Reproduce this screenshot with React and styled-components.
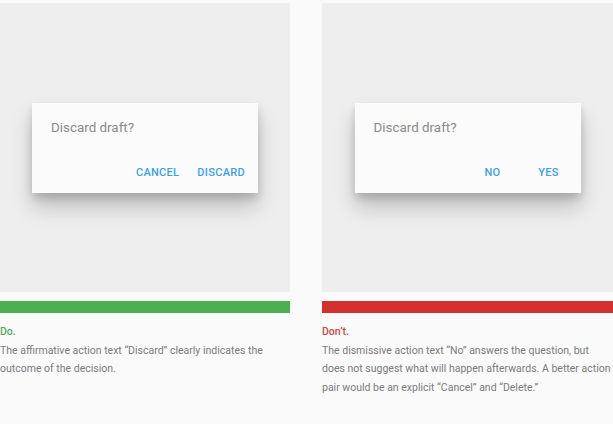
import React from "react";
import styled, { createGlobalStyle } from "styled-components";

const GlobalStyle = createGlobalStyle`
  html, body {
    margin: 0;
    padding: 0;
    background: #fafafa;
  }
  body {
    font-family: Roboto, "Liberation Sans", sans-serif;
  }
`;

const Page = styled.div`
  display: flex;
  gap: 32px;
  width: 613px;
  height: 424px;
  padding-top: 3px;
  box-sizing: border-box;
  overflow: hidden;
  background: #fafafa;
`;

const Column = styled.div`
  flex: 0 0 ${p => p.$width}px;
  display: flex;
  flex-direction: column;
`;

const Stage = styled.div`
  height: 289px;
  background: #eeeeee;
  display: flex;
  justify-content: center;
  align-items: flex-start;
  padding-top: 100px;
  box-sizing: border-box;
`;

const Dialog = styled.div`
  width: 226px;
  height: 90px;
  background: #fbfbfb;
  box-shadow: 0 14px 20px rgba(0, 0, 0, 0.2), 0 5px 8px rgba(0, 0, 0, 0.14);
  display: flex;
  flex-direction: column;
  justify-content: space-between;
  padding: 17px 0 7px 19px;
  box-sizing: border-box;
`;

const Title = styled.div`
  font-size: 13.4px;
  line-height: 16px;
  color: #8a8a8a;
`;

const Actions = styled.div`
  display: flex;
  justify-content: flex-end;
  gap: 4px;
  padding-right: 6px;
`;

const ActionButton = styled.button`
  min-width: 52px;
  height: 28px;
  padding: 0 7px;
  border: 0;
  background: transparent;
  font-family: Roboto, "Liberation Sans", sans-serif;
  font-size: 11px;
  font-weight: 500;
  letter-spacing: 0.3px;
  color: #3d9ff0;
  cursor: pointer;
`;

const Bar = styled.div`
  height: 12px;
  margin-top: 9px;
  background: ${p => p.$color};
`;

const Caption = styled.div`
  margin-top: 10px;
  font-size: 10.5px;
  line-height: 18.7px;
  color: #7a7a7a;
`;

const Verdict = styled.div`
  color: ${p => p.$color};
  font-weight: 500;
`;

const examples = [
  {
    width: 290,
    color: "#4caf50",
    textColor: "#5aa85d",
    verdict: "Do.",
    actions: ["CANCEL", "DISCARD"],
    text: "The affirmative action text \u201cDiscard\u201d clearly indicates the outcome of the decision.",
  },
  {
    width: 291,
    color: "#d32f2f",
    textColor: "#d04545",
    verdict: "Don\u2019t.",
    actions: ["NO", "YES"],
    text: "The dismissive action text \u201cNo\u201d answers the question, but does not suggest what will happen afterwards. A better action pair would be an explicit \u201cCancel\u201d and \u201cDelete.\u201d",
  },
];

function App() {
  return (
    <>
      <GlobalStyle />
      <Page>
        {examples.map(ex => (
          <Column key={ex.verdict} $width={ex.width}>
            <Stage>
              <Dialog>
                <Title>Discard draft?</Title>
                <Actions>
                  {ex.actions.map(a => (
                    <ActionButton key={a}>{a}</ActionButton>
                  ))}
                </Actions>
              </Dialog>
            </Stage>
            <Bar $color={ex.color} />
            <Caption>
              <Verdict $color={ex.textColor}>{ex.verdict}</Verdict>
              {ex.text}
            </Caption>
          </Column>
        ))}
      </Page>
    </>
  );
}

export default App;
